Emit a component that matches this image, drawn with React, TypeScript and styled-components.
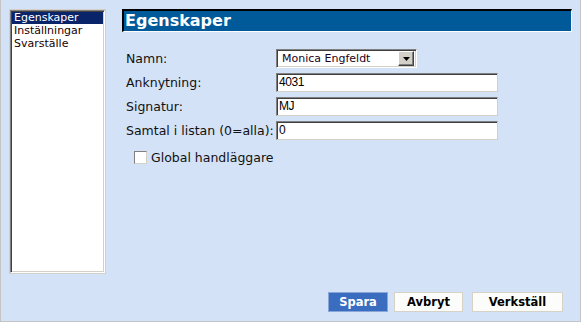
import React from 'react'
import styled, { createGlobalStyle } from 'styled-components'

const GlobalStyle = createGlobalStyle`
  html, body {
    margin: 0;
    padding: 0;
    background: #d4e2f7;
  }
`

const Page = styled.div`
  background: #d4e2f7;
  border-bottom: 1px solid #c4c4c4;
  border-left: 1px solid #c4c4c4;
  border-right: 1px solid #c4c4c4;
  box-sizing: border-box;
  display: flex;
  flex-direction: column;
  font-family: 'DejaVu Sans', Verdana, sans-serif;
  height: 322px;
  padding: 9px 8px 9px 8px;
  width: 581px;
`

const Body = styled.div`
  display: flex;
  gap: 16px;
`

const ListFrame = styled.div`
  border: 1px solid #d4d0c8;
  box-sizing: border-box;
  flex-shrink: 0;
  height: 265px;
  width: 97px;
`

const List = styled.ul`
  background: #fff;
  border-bottom: 1px solid #fff;
  border-left: 1px solid #808080;
  border-right: 1px solid #fff;
  border-top: 1px solid #808080;
  box-shadow: inset 1px 1px 0 #404040, inset -1px -1px 0 #d4d0c8;
  box-sizing: border-box;
  height: 100%;
  list-style: none;
  margin: 0;
  padding: 1px;
`

const ListItem = styled.li<{ $selected?: boolean }>`
  background: ${(p) => (p.$selected ? '#0a246a' : 'transparent')};
  color: ${(p) => (p.$selected ? '#fff' : '#1a0000')};
  font-size: 11px;
  height: 12px;
  line-height: 12px;
  margin-bottom: 1px;
  padding-left: 2px;
  white-space: nowrap;
`

const Main = styled.div`
  display: flex;
  flex: 1;
  flex-direction: column;
`

const Header = styled.h1`
  background: #005a9a;
  border-bottom: 1px solid #fff;
  border-left: 2px solid #000;
  border-right: 1px solid #fff;
  border-top: 2px solid #000;
  color: #fff;
  font-size: 16px;
  font-weight: bold;
  height: 20px;
  line-height: 20px;
  margin: 0;
  padding-left: 1px;
`

const Form = styled.div`
  display: flex;
  flex-direction: column;
  gap: 5px;
  margin-top: 17px;
  padding-left: 4px;
`

const Row = styled.div`
  align-items: center;
  display: flex;
  height: 19px;
`

const Label = styled.label`
  color: #111;
  font-size: 12.5px;
  white-space: nowrap;
  width: 150px;
`

const TextInput = styled.div`
  background: #fff;
  border-bottom: 1px solid #d4d0c8;
  border-left: 1px solid #808080;
  border-right: 1px solid #d4d0c8;
  border-top: 1px solid #808080;
  box-shadow: inset 1px 1px 0 #404040;
  box-sizing: border-box;
  color: #000;
  font-family: 'Liberation Sans', Arial, sans-serif;
  font-size: 12px;
  height: 19px;
  letter-spacing: -0.4px;
  line-height: 17px;
  padding-left: 2px;
  width: 222px;
`

const Select = styled.div`
  align-items: center;
  background: #fff;
  border-bottom: 1px solid #fff;
  border-left: 1px solid #808080;
  border-right: 1px solid #fff;
  border-top: 1px solid #808080;
  box-shadow: inset 1px 1px 0 #404040, inset -1px -1px 0 #d4d0c8;
  box-sizing: border-box;
  display: flex;
  height: 19px;
  padding: 2px;
  width: 141px;
`

const SelectValue = styled.span`
  color: #1a0020;
  flex: 1;
  font-size: 11px;
  padding-left: 3px;
`

const SelectButton = styled.span`
  align-items: center;
  background: #d4d0c8;
  border-bottom: 1px solid #404040;
  border-left: 1px solid #fff;
  border-right: 1px solid #404040;
  border-top: 1px solid #fff;
  box-shadow: inset -1px -1px 0 #808080;
  box-sizing: border-box;
  display: flex;
  height: 15px;
  justify-content: center;
  width: 16px;
`

const CheckRow = styled.div`
  align-items: center;
  display: flex;
  height: 19px;
  margin-top: 3px;
  padding-left: 8px;
`

const CheckBox = styled.span`
  background: #fff;
  border-bottom: 1px solid #d4d0c8;
  border-left: 1px solid #808080;
  border-right: 1px solid #d4d0c8;
  border-top: 1px solid #808080;
  box-sizing: border-box;
  height: 13px;
  width: 13px;
`

const CheckLabel = styled.span`
  color: #111;
  font-size: 12.5px;
  margin-left: 4px;
`

const Footer = styled.div`
  display: flex;
  justify-content: flex-end;
  margin-top: 18px;
  padding-right: 9px;
`

const Button = styled.button<{ $primary?: boolean; $width: number; $gap?: number }>`
  background: ${(p) => (p.$primary ? '#3a6cbf' : '#fcfcfb')};
  border: 1px solid ${(p) => (p.$primary ? '#8aa6d6' : '#d6d2c6')};
  box-sizing: border-box;
  color: ${(p) => (p.$primary ? '#fff' : '#000')};
  font-family: 'DejaVu Sans', Verdana, sans-serif;
  font-size: 11.5px;
  font-weight: bold;
  height: 20px;
  margin-left: ${(p) => p.$gap ?? 0}px;
  padding: 0;
  width: ${(p) => p.$width}px;
`

export default function App() {
  const items = ['Egenskaper', 'Inställningar', 'Svarställe']
  return (
    <>
      <GlobalStyle />
      <Page>
        <Body>
          <ListFrame>
            <List>
              {items.map((item, index) => (
                <ListItem key={item} $selected={index === 0}>
                  {item}
                </ListItem>
              ))}
            </List>
          </ListFrame>
          <Main>
            <Header>Egenskaper</Header>
            <Form>
              <Row>
                <Label>Namn:</Label>
                <Select>
                  <SelectValue>Monica Engfeldt</SelectValue>
                  <SelectButton>
                    <svg width="7" height="4" viewBox="0 0 7 4">
                      <path d="M0 0h7L3.5 4z" fill="#000" />
                    </svg>
                  </SelectButton>
                </Select>
              </Row>
              <Row>
                <Label>Anknytning:</Label>
                <TextInput>4031</TextInput>
              </Row>
              <Row>
                <Label>Signatur:</Label>
                <TextInput>MJ</TextInput>
              </Row>
              <Row>
                <Label>Samtal i listan (0=alla):</Label>
                <TextInput>0</TextInput>
              </Row>
              <CheckRow>
                <CheckBox />
                <CheckLabel>Global handläggare</CheckLabel>
              </CheckRow>
            </Form>
          </Main>
        </Body>
        <Footer>
          <Button $primary $width={60}>
            Spara
          </Button>
          <Button $width={69} $gap={6}>
            Avbryt
          </Button>
          <Button $width={91} $gap={9}>
            Verkställ
          </Button>
        </Footer>
      </Page>
    </>
  )
}
